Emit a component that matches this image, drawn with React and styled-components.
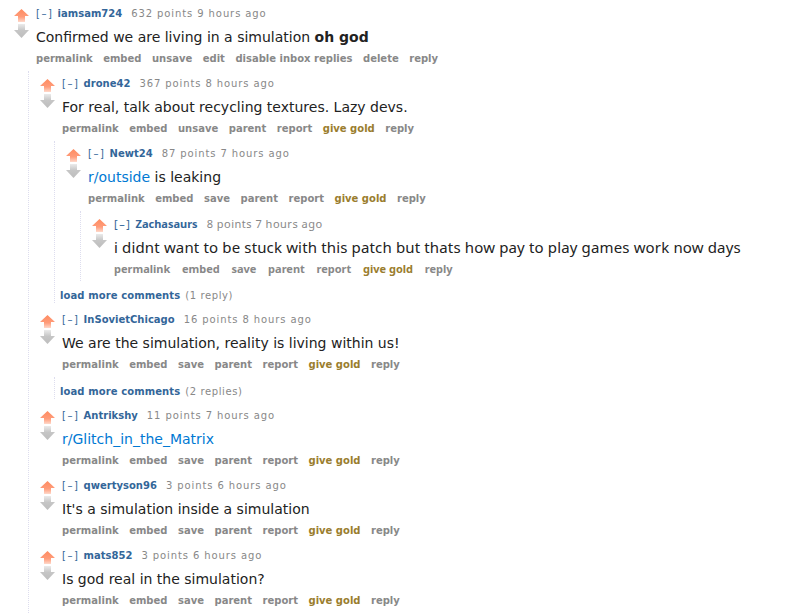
import React from 'react';
import styled, { createGlobalStyle } from 'styled-components';

const GlobalStyle = createGlobalStyle`
  body {
    margin: 0;
    background: #ffffff;
    font-family: Verdana, "DejaVu Sans", sans-serif;
  }
`;

const Page = styled.div`
  padding: 1px 0 0 3px;
  height: 613px;
  overflow: hidden;
`;

const CommentWrap = styled.div`
  font-family: ${props => (props.$alt ? '"Noto Sans", "DejaVu Sans", sans-serif' : 'Verdana, "DejaVu Sans", sans-serif')};
`;

const CommentRow = styled.div`
  display: flex;
  align-items: flex-start;
  padding: 6px 0 5px 11px;
`;

const Voter = styled.div`
  width: 15px;
  flex: none;
  display: flex;
  flex-direction: column;
  gap: 2px;
  padding-top: 2px;
`;

const Entry = styled.div`
  margin-left: 7px;
  min-width: 0;
`;

const Tagline = styled.div`
  font-size: ${props => (props.$alt ? '11px' : '10px')};
  line-height: 14px;
  height: 14px;
  color: #888;
  letter-spacing: ${props => (props.$alt ? '0.5px' : '0.9px')};
  white-space: nowrap;
`;

const Expand = styled.span`
  color: #369;
  letter-spacing: 1.6px;
  margin-right: 4px;
`;

const Author = styled.span`
  color: #369;
  font-weight: bold;
  letter-spacing: 0;
  margin-right: 9px;
`;

const Body = styled.div`
  margin-top: 6px;
  font-size: ${props => (props.$alt ? '15px' : '14px')};
  letter-spacing: ${props => (props.$alt ? '0.15px' : 'normal')};
  line-height: 20px;
  height: 20px;
  color: #222;
  white-space: nowrap;

  b {
    font-weight: bold;
  }
`;

const SubLink = styled.span`
  color: #0079d3;
`;

const Buttons = styled.ul`
  display: flex;
  gap: ${props => (props.$alt ? '11.7px' : '10.5px')};
  list-style: none;
  margin: 5px 0 0;
  padding: 0;
  height: 14px;
  line-height: 14px;
  font-size: ${props => (props.$alt ? '11px' : '10px')};
`;

const Button = styled.li`
  font-weight: bold;
  color: ${props => (props.$gold ? '#9a7d2e' : '#888')};
  white-space: nowrap;
`;

const Children = styled.div`
  margin-left: 25px;
  border-left: 1px dotted #dde;
  margin-bottom: ${props => (props.$gap ? '4px' : '0')};
`;

const LoadMore = styled.div`
  padding: 8px 0 0 5px;
  font-size: 10px;
  line-height: 14px;
  color: #888;
  letter-spacing: 0.6px;
  white-space: nowrap;
`;

const LoadMoreLink = styled.span`
  color: #369;
  font-weight: bold;
  letter-spacing: 0.1px;
  margin-right: 5px;
`;

function UpArrow() {
  return (
    <svg width="15" height="13" viewBox="0 0 15 13">
      <defs>
        <linearGradient id="upg" x1="0" y1="0" x2="0" y2="1">
          <stop offset="0" stopColor="#ff8b60" />
          <stop offset="0.6" stopColor="#ff9c7a" />
          <stop offset="1" stopColor="#ffd9cb" />
        </linearGradient>
      </defs>
      <polygon points="7.5,0 15,7 11,7 11,13 4,13 4,7 0,7" fill="url(#upg)" />
    </svg>
  );
}

function DownArrow() {
  return (
    <svg width="15" height="14" viewBox="0 0 15 14">
      <defs>
        <linearGradient id="downg" x1="0" y1="0" x2="0" y2="1">
          <stop offset="0" stopColor="#ebebeb" />
          <stop offset="0.45" stopColor="#c6c6c6" />
          <stop offset="1" stopColor="#bdbdbd" />
        </linearGradient>
      </defs>
      <polygon points="4,0 11,0 11,6 15,6 7.5,14 0,6 4,6" fill="url(#downg)" />
    </svg>
  );
}

const DEFAULT_BUTTONS = ['permalink', 'embed', 'save', 'parent', 'report', 'give gold', 'reply'];

function Comment({ author, points, age, buttons = DEFAULT_BUTTONS, alt, children, body }) {
  return (
    <CommentWrap $alt={alt}>
      <CommentRow>
        <Voter>
          <UpArrow />
          <DownArrow />
        </Voter>
        <Entry>
          <Tagline $alt={alt}>
            <Expand>[–]</Expand>
            <Author>{author}</Author>
            {points} points {age} ago
          </Tagline>
          <Body $alt={alt}>{body}</Body>
          <Buttons $alt={alt}>
            {buttons.map(b => (
              <Button key={b} $gold={b === 'give gold'}>{b}</Button>
            ))}
          </Buttons>
        </Entry>
      </CommentRow>
      {children}
    </CommentWrap>
  );
}

function MoreComments({ count }) {
  return (
    <LoadMore>
      <LoadMoreLink>load more comments</LoadMoreLink>({count})
    </LoadMore>
  );
}

export default function App() {
  return (
    <Page>
      <GlobalStyle />
      <Comment
        author="iamsam724"
        points="632"
        age="9 hours"
        buttons={['permalink', 'embed', 'unsave', 'edit', 'disable inbox replies', 'delete', 'reply']}
        body={<>Confirmed we are living in a simulation <b>oh god</b></>}
      >
        <Children>
          <Comment
            author="drone42"
            points="367"
            age="8 hours"
            buttons={['permalink', 'embed', 'unsave', 'parent', 'report', 'give gold', 'reply']}
            body="For real, talk about recycling textures. Lazy devs."
          >
            <Children $gap>
              <Comment
                author="Newt24"
                points="87"
                age="7 hours"
                body={<><SubLink>r/outside</SubLink> is leaking</>}
              >
                <Children>
                  <Comment
                    alt
                    author="Zachasaurs"
                    points="8"
                    age="7 hours"
                    body="i didnt want to be stuck with this patch but thats how pay to play games work now days"
                  />
                </Children>
              </Comment>
              <MoreComments count="1 reply" />
            </Children>
          </Comment>
          <Comment
            author="InSovietChicago"
            points="16"
            age="8 hours"
            body="We are the simulation, reality is living within us!"
          >
            <Children $gap>
              <MoreComments count="2 replies" />
            </Children>
          </Comment>
          <Comment
            author="Antrikshy"
            points="11"
            age="7 hours"
            body={<SubLink>r/Glitch_in_the_Matrix</SubLink>}
          />
          <Comment
            author="qwertyson96"
            points="3"
            age="6 hours"
            body="It's a simulation inside a simulation"
          />
          <Comment
            author="mats852"
            points="3"
            age="6 hours"
            body="Is god real in the simulation?"
          />
        </Children>
      </Comment>
    </Page>
  );
}
